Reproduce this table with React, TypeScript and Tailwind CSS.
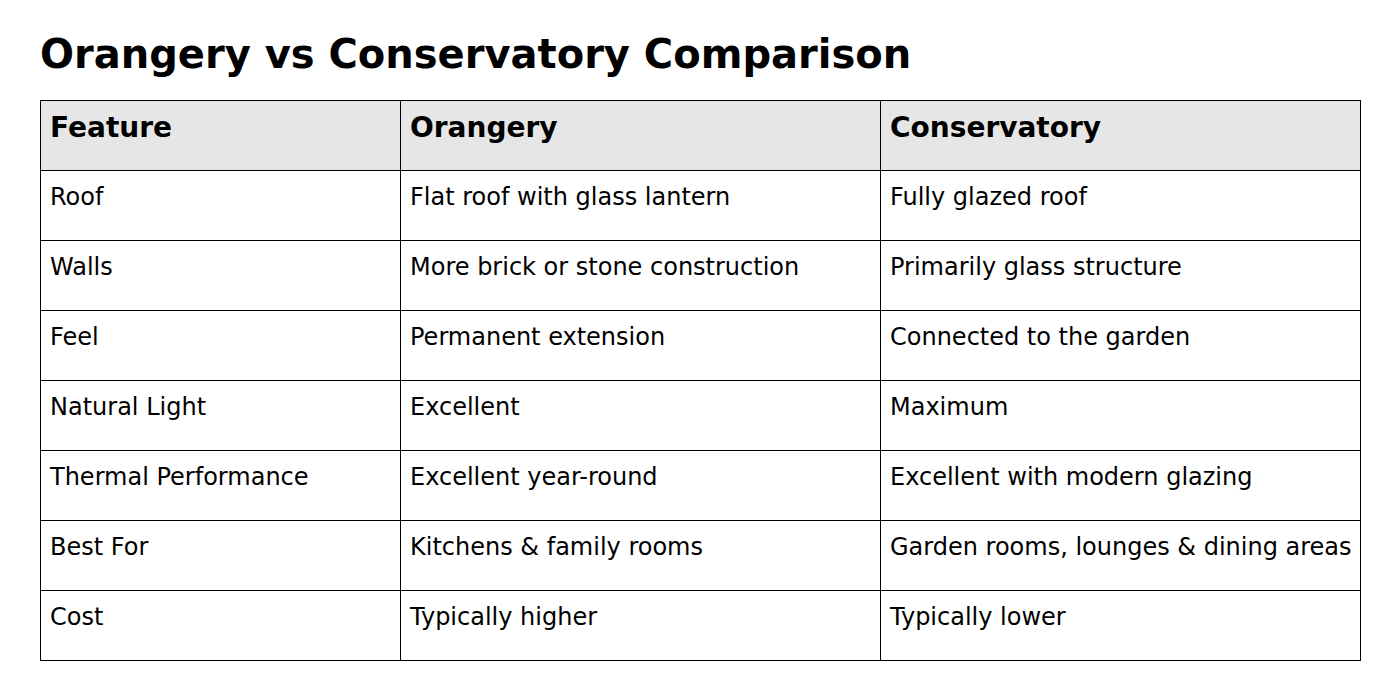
import React from "react";

const rows: [string, string, string][] = [
  ["Roof", "Flat roof with glass lantern", "Fully glazed roof"],
  ["Walls", "More brick or stone construction", "Primarily glass structure"],
  ["Feel", "Permanent extension", "Connected to the garden"],
  ["Natural Light", "Excellent", "Maximum"],
  ["Thermal Performance", "Excellent year-round", "Excellent with modern glazing"],
  ["Best For", "Kitchens & family rooms", "Garden rooms, lounges & dining areas"],
  ["Cost", "Typically higher", "Typically lower"],
];

export default function App() {
  return (
    <div
      className="min-h-[700px] bg-white px-10 pt-[30px] text-black"
      style={{ fontFamily: '"DejaVu Sans", sans-serif' }}
    >
      <h1 className="text-[40px] font-bold leading-[48px] mb-[22px]">
        Orangery vs Conservatory Comparison
      </h1>
      <table className="w-[1320px] border-collapse table-fixed text-[24px]">
        <colgroup>
          <col className="w-[360px]" />
          <col className="w-[480px]" />
          <col className="w-[480px]" />
        </colgroup>
        <thead>
          <tr className="bg-[#e6e6e6]">
            {["Feature", "Orangery", "Conservatory"].map((h) => (
              <th
                key={h}
                className="h-[70px] border border-black pl-[9px] pr-[10px] pt-[13px] pb-0 text-left align-top text-[28px] font-bold leading-[28px]"
              >
                {h}
              </th>
            ))}
          </tr>
        </thead>
        <tbody>
          {rows.map((r) => (
            <tr key={r[0]}>
              {r.map((c, i) => (
                <td
                  key={i}
                  className="h-[70px] border border-black pl-[9px] pr-[10px] pt-[12px] pb-0 align-top leading-[28px] whitespace-nowrap"
                >
                  {c}
                </td>
              ))}
            </tr>
          ))}
        </tbody>
      </table>
    </div>
  );
}
